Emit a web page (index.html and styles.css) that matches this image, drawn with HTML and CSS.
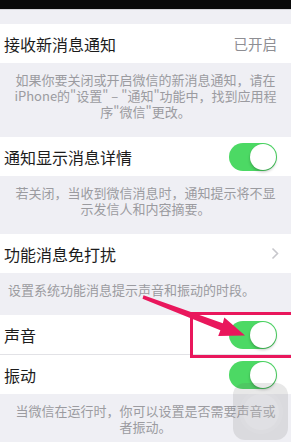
FILE: index.html
```html
<!DOCTYPE html>
<html lang="zh">
<head>
<meta charset="utf-8">
<link rel="stylesheet" href="styles.css">
</head>
<body>
<div class="screen">
  <div class="statusbar"></div>
  <div class="topgap"></div>

  <div class="cell"><span class="label">接收新消息通知</span><span class="value">已开启</span></div>
  <div class="footer">如果你要关闭或开启微信的新消息通知，请在<br>iPhone的"设置" – "通知"功能中，找到应用程<br>序"微信"更改。</div>

  <div class="cell"><span class="label">通知显示消息详情</span><span class="toggle"><span class="knob"></span></span></div>
  <div class="footer">若关闭，当收到微信消息时，通知提示将不显<br>示发信人和内容摘要。</div>

  <div class="cell"><span class="label">功能消息免打扰</span>
    <svg class="chev" width="8" height="13" viewBox="0 0 8 13"><polyline points="1.5,1.5 6.5,6.5 1.5,11.5" fill="none" stroke="#c7c7cc" stroke-width="1.6"/></svg>
  </div>
  <div class="footer left">设置系统功能消息提示声音和振动的时段。</div>

  <div class="group">
    <div class="cell sep"><span class="label">声音</span><span class="toggle"><span class="knob"></span></span></div>
    <div class="cell"><span class="label">振动</span><span class="toggle"><span class="knob"></span></span></div>
  </div>
  <div class="footer">当微信在运行时，你可以设置是否需要声音或<br>者振动。</div>

  <div class="redbox"></div>
  <svg class="arrow" width="291" height="442" viewBox="0 0 291 442">
    <polygon points="143.5,295.2 222.8,323.3 224.3,317.6 245,335.5 218.2,336 220.4,330.2 142.5,298.8" fill="#e9175c"/>
  </svg>
  <div class="assist"><div class="assist-ring"></div></div>
</div>
</body>
</html>
```
FILE: styles.css
```css
html, body {
  margin: 0;
  padding: 0;
}
body {
  background: #efeff4;
  font-family: "Noto Sans CJK SC", "Noto Sans", sans-serif;
  color: #1c1c1c;
}
.screen {
  position: relative;
  width: 291px;
  height: 442px;
  overflow: hidden;
  background: #efeff4;
}
.statusbar {
  height: 9px;
  background: #0a0a0a;
}
.topgap {
  height: 15px;
  border-top: 1px solid #d6d6da;
  box-sizing: border-box;
}
.cell {
  height: 39px;
  background: #fff;
  display: flex;
  align-items: center;
  justify-content: space-between;
  padding: 0 14px 0 4px;
  box-sizing: border-box;
}
.label {
  font-size: 16px;
  line-height: 20px;
}
.value {
  font-size: 14.5px;
  color: #8e8e93;
}
.chev {
  margin-right: -2px;
}
.footer {
  font-size: 13px;
  line-height: 16px;
  color: #9b9ba0;
  text-align: center;
  padding: 9px 6px 17px;
  white-space: nowrap;
}
.footer.left {
  text-align: left;
  padding-left: 8px;
}
.group .sep {
  height: 40px;
  border-bottom: 1px solid #e2e2e6;
}
.toggle {
  width: 48px;
  height: 28px;
  border-radius: 14px;
  background: #4cd964;
  display: flex;
  align-items: center;
  justify-content: flex-end;
  padding: 1px;
  box-sizing: border-box;
}
.knob {
  width: 26px;
  height: 26px;
  border-radius: 50%;
  background: #fff;
  box-shadow: 0 2px 3px rgba(0, 0, 0, 0.22), 0 0 0 0.5px rgba(0, 0, 0, 0.06);
}
.redbox {
  position: absolute;
  left: 190px;
  top: 312px;
  width: 110px;
  height: 46px;
  border: 3.5px solid #e9175c;
  box-sizing: border-box;
}
.arrow {
  position: absolute;
  left: 0;
  top: 0;
}
.assist {
  position: absolute;
  left: 233px;
  top: 383px;
  width: 55px;
  height: 57px;
  border-radius: 12px;
  background: rgba(90, 90, 95, 0.14);
  display: flex;
  align-items: center;
  justify-content: center;
}
.assist-ring {
  width: 36px;
  height: 36px;
  border-radius: 50%;
  background: rgba(255, 255, 255, 0.18);
  box-shadow: 0 0 0 4px rgba(255, 255, 255, 0.08);
}
```
